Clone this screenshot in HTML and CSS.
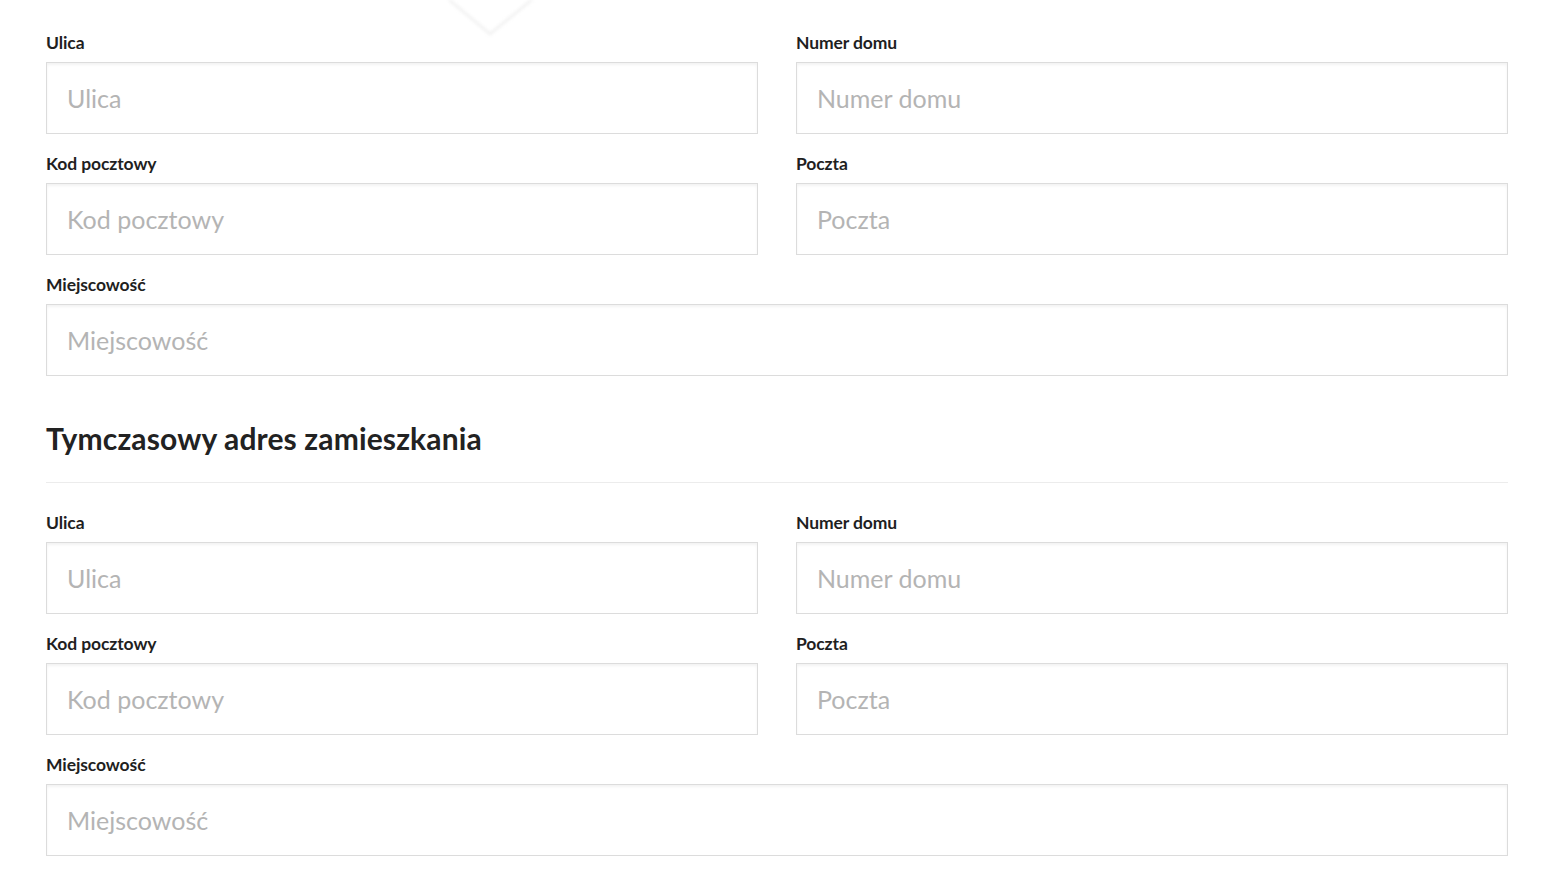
FILE: index.html
```html
<!DOCTYPE html>
<html lang="pl">
<head>
<meta charset="utf-8">
<link rel="stylesheet" href="styles.css">
</head>
<body>
<svg class="arrow-shadow" width="100" height="40" viewBox="0 0 100 40">
  <polyline points="3,-2 46,34 90,-2" fill="none" stroke="#f3f3f3" stroke-width="3"/>
</svg>
<main class="form">
  <section class="grid">
    <div class="field">
      <label class="label">Ulica</label>
      <input class="input" placeholder="Ulica">
    </div>
    <div class="field">
      <label class="label">Numer domu</label>
      <input class="input" placeholder="Numer domu">
    </div>
    <div class="field">
      <label class="label">Kod pocztowy</label>
      <input class="input" placeholder="Kod pocztowy">
    </div>
    <div class="field">
      <label class="label">Poczta</label>
      <input class="input" placeholder="Poczta">
    </div>
    <div class="field full">
      <label class="label">Miejscowość</label>
      <input class="input" placeholder="Miejscowość">
    </div>
  </section>

  <h2 class="heading">Tymczasowy adres zamieszkania</h2>
  <hr class="divider">

  <section class="grid">
    <div class="field">
      <label class="label">Ulica</label>
      <input class="input" placeholder="Ulica">
    </div>
    <div class="field">
      <label class="label">Numer domu</label>
      <input class="input" placeholder="Numer domu">
    </div>
    <div class="field">
      <label class="label">Kod pocztowy</label>
      <input class="input" placeholder="Kod pocztowy">
    </div>
    <div class="field">
      <label class="label">Poczta</label>
      <input class="input" placeholder="Poczta">
    </div>
    <div class="field full">
      <label class="label">Miejscowość</label>
      <input class="input" placeholder="Miejscowość">
    </div>
  </section>
</main>
</body>
</html>
```

FILE: styles.css
```css
* { box-sizing: border-box; }
html, body {
  margin: 0;
  background: #fff;
  font-family: Lato, "Open Sans", sans-serif;
  color: #222;
}
body { position: relative; }
.arrow-shadow {
  position: absolute;
  left: 444px;
  top: 0;
  filter: blur(1.5px);
}
.form {
  width: 1462px;
  margin-left: 46px;
  padding-top: 33px;
}
.grid {
  display: grid;
  grid-template-columns: 1fr 1fr;
  column-gap: 38px;
  row-gap: 20px;
}
.field { display: flex; flex-direction: column; }
.field.full { grid-column: 1 / -1; }
.label {
  font-size: 17.5px;
  font-weight: 700;
  line-height: 20px;
  margin-bottom: 9px;
  color: #1f1f1f;
  letter-spacing: -0.1px;
}
.input {
  height: 72px;
  border: 1px solid #dcdcdc;
  border-radius: 0;
  padding: 0 20px;
  font-family: Lato, sans-serif;
  font-size: 25px;
  color: #333;
  background: #fff;
  box-shadow: inset 0 2px 3px rgba(0,0,0,0.05);
  outline: none;
}
.input::placeholder { color: #b4b4b4; }
.heading {
  margin: 44px 0 0;
  font-size: 30px;
  line-height: 36px;
  font-weight: 700;
  letter-spacing: 0.14px;
  color: #222;
}
.divider {
  margin: 26px 0 30px;
  border: 0;
  border-top: 1px solid #ececec;
  height: 0;
}
```
